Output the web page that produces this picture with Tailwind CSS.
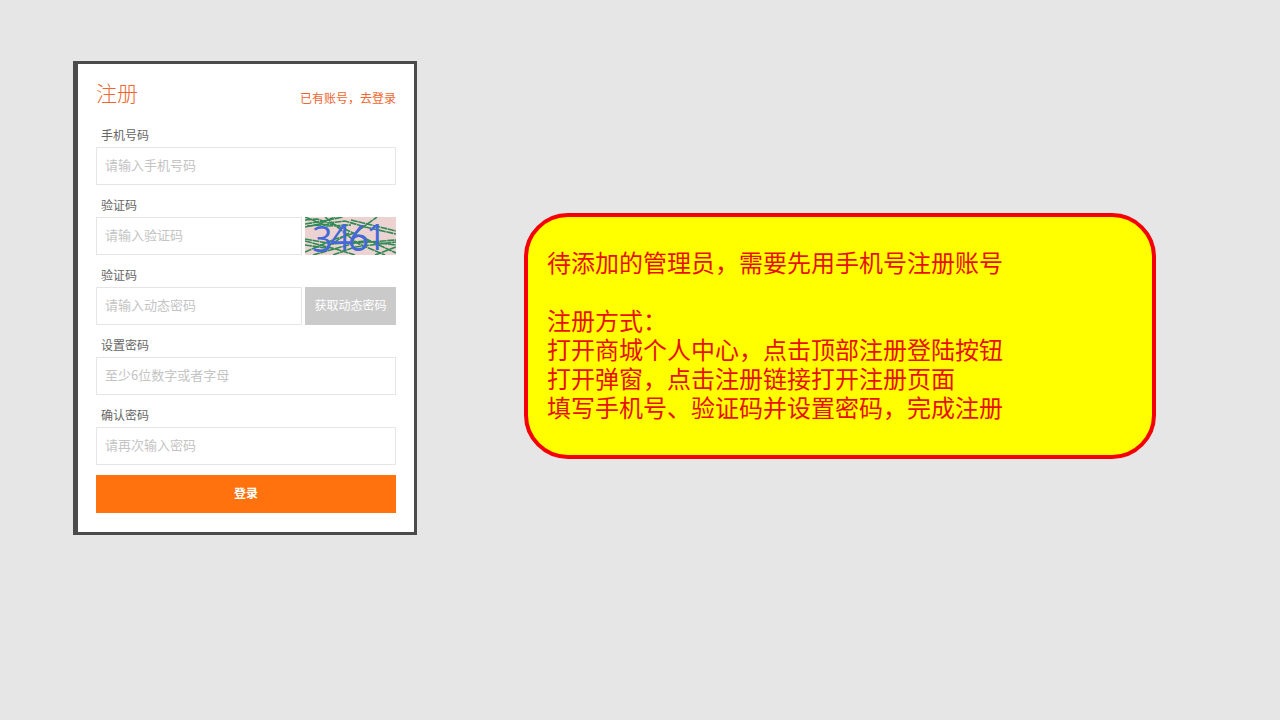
<!DOCTYPE html>
<html lang="zh-CN">
 <head>
  <meta charset="utf-8"/>
  <meta content="width=device-width, initial-scale=1.0" name="viewport"/>
  <title>
   注册
  </title>
  <script src="https://cdn.jsdelivr.net/npm/@tailwindcss/browser@4"></script>
 </head>
 <body class="min-h-screen bg-[#e6e6e6] font-['Noto_Sans_CJK_SC',sans-serif]">
  <main class="flex items-start gap-[107px] pt-[61px] pr-[124px] pl-[73px]">
   <!-- Register form -->
   <section class="w-[344px] shrink-0 border-t-[3px] border-r-[3px] border-b-[3px] border-l-[5px] border-[#4b4b4b] bg-white px-[18px] pt-3.5 pb-[19px]">
    <header class="mb-[15px] flex h-8 items-end justify-between text-[#f0662f]">
     <h1 class="self-start text-[21px] leading-7 font-light">注册</h1>
     <a class="text-xs leading-6" href="#">已有账号，去登录</a>
    </header>
    <form class="space-y-2.5">
     <div>
      <label class="mb-0.5 block pl-[5px] text-xs leading-5 text-[#666]" for="phone">手机号码</label>
      <input class="block h-[38px] w-full border border-[#e6e6e6] px-2 pb-1 text-[13px] placeholder:text-[#c4c4c4]" id="phone" placeholder="请输入手机号码" type="tel"/>
     </div>
     <div>
      <label class="mb-0.5 block pl-[5px] text-xs leading-5 text-[#666]" for="captcha">验证码</label>
      <div class="flex gap-[3px]">
       <input class="block h-[38px] min-w-0 flex-1 border border-[#e6e6e6] px-2 pb-1 text-[13px] placeholder:text-[#c4c4c4]" id="captcha" placeholder="请输入验证码" type="text"/>
       <svg class="h-[38px] w-[91px] bg-[#ecd2d0]" viewBox="0 0 91 38" role="img" aria-label="验证码图片">
        <g fill="none" stroke="#2f8a55" stroke-width="1.6" stroke-dasharray="7 0.6">
         <path d="M0 3L12 2L24 6L40 4L60 10L91 17"/>
         <path d="M0 10L14 7L30 0"/>
         <path d="M0 0L22 9L46 8"/>
         <path d="M0 7L18 4L38 0"/>
         <path d="M2 9L28 7L44 14L91 36"/>
         <path d="M0 22L28 27L60 24L91 28"/>
         <path d="M0 35L30 22L50 16L72 0"/>
         <path d="M0 28L20 31L44 16"/>
         <path d="M8 38L50 26L91 23"/>
         <path d="M20 0L52 26L80 38"/>
         <path d="M0 24L34 33L50 38"/>
         <path d="M28 38L50 30L91 25"/>
         <path d="M70 38L91 30"/>
         <path d="M46 3L91 14"/>
        </g>
        <g class="font-['Open_Sans',sans-serif]" fill="#4468d8" font-size="36">
         <text x="7" y="35">3</text>
         <text x="25" y="33">4</text>
         <text class="font-['Lato',sans-serif]" x="43" y="34">6</text>
         <text x="61" y="33">1</text>
        </g>
       </svg>
      </div>
     </div>
     <div>
      <label class="mb-0.5 block pl-[5px] text-xs leading-5 text-[#666]" for="code">验证码</label>
      <div class="flex gap-[3px]">
       <input class="block h-[38px] min-w-0 flex-1 border border-[#e6e6e6] px-2 pb-1 text-[13px] placeholder:text-[#c4c4c4]" id="code" placeholder="请输入动态密码" type="text"/>
       <button class="h-[38px] w-[91px] bg-[#cacaca] pb-0.5 text-xs text-white" type="button">获取动态密码</button>
      </div>
     </div>
     <div>
      <label class="mb-0.5 block pl-[5px] text-xs leading-5 text-[#666]" for="password">设置密码</label>
      <input class="block h-[38px] w-full border border-[#e6e6e6] px-2 pb-1 text-[13px] placeholder:text-[#c4c4c4]" id="password" placeholder="至少6位数字或者字母" type="password"/>
     </div>
     <div>
      <label class="mb-0.5 block pl-[5px] text-xs leading-5 text-[#666]" for="confirm">确认密码</label>
      <input class="block h-[38px] w-full border border-[#e6e6e6] px-2 pb-1 text-[13px] placeholder:text-[#c4c4c4]" id="confirm" placeholder="请再次输入密码" type="password"/>
     </div>
     <button class="block h-[38px] w-full bg-[#ff720d] pb-0.5 text-xs font-bold text-white" type="submit">登录</button>
    </form>
   </section>
   <!-- Note -->
   <aside class="mt-[152px] min-w-0 flex-1 rounded-[44px] border-4 border-[#f60008] bg-[#ffff00] px-[19px] pt-[30px] pb-[34px] text-2xl leading-[29px] text-[#e81000]">
    <p class="mb-[29px]">待添加的管理员，需要先用手机号注册账号</p>
    <p>注册方式：</p>
    <p>打开商城个人中心，点击顶部注册登陆按钮</p>
    <p>打开弹窗，点击注册链接打开注册页面</p>
    <p>填写手机号、验证码并设置密码，完成注册</p>
   </aside>
  </main>
 </body>
</html>
